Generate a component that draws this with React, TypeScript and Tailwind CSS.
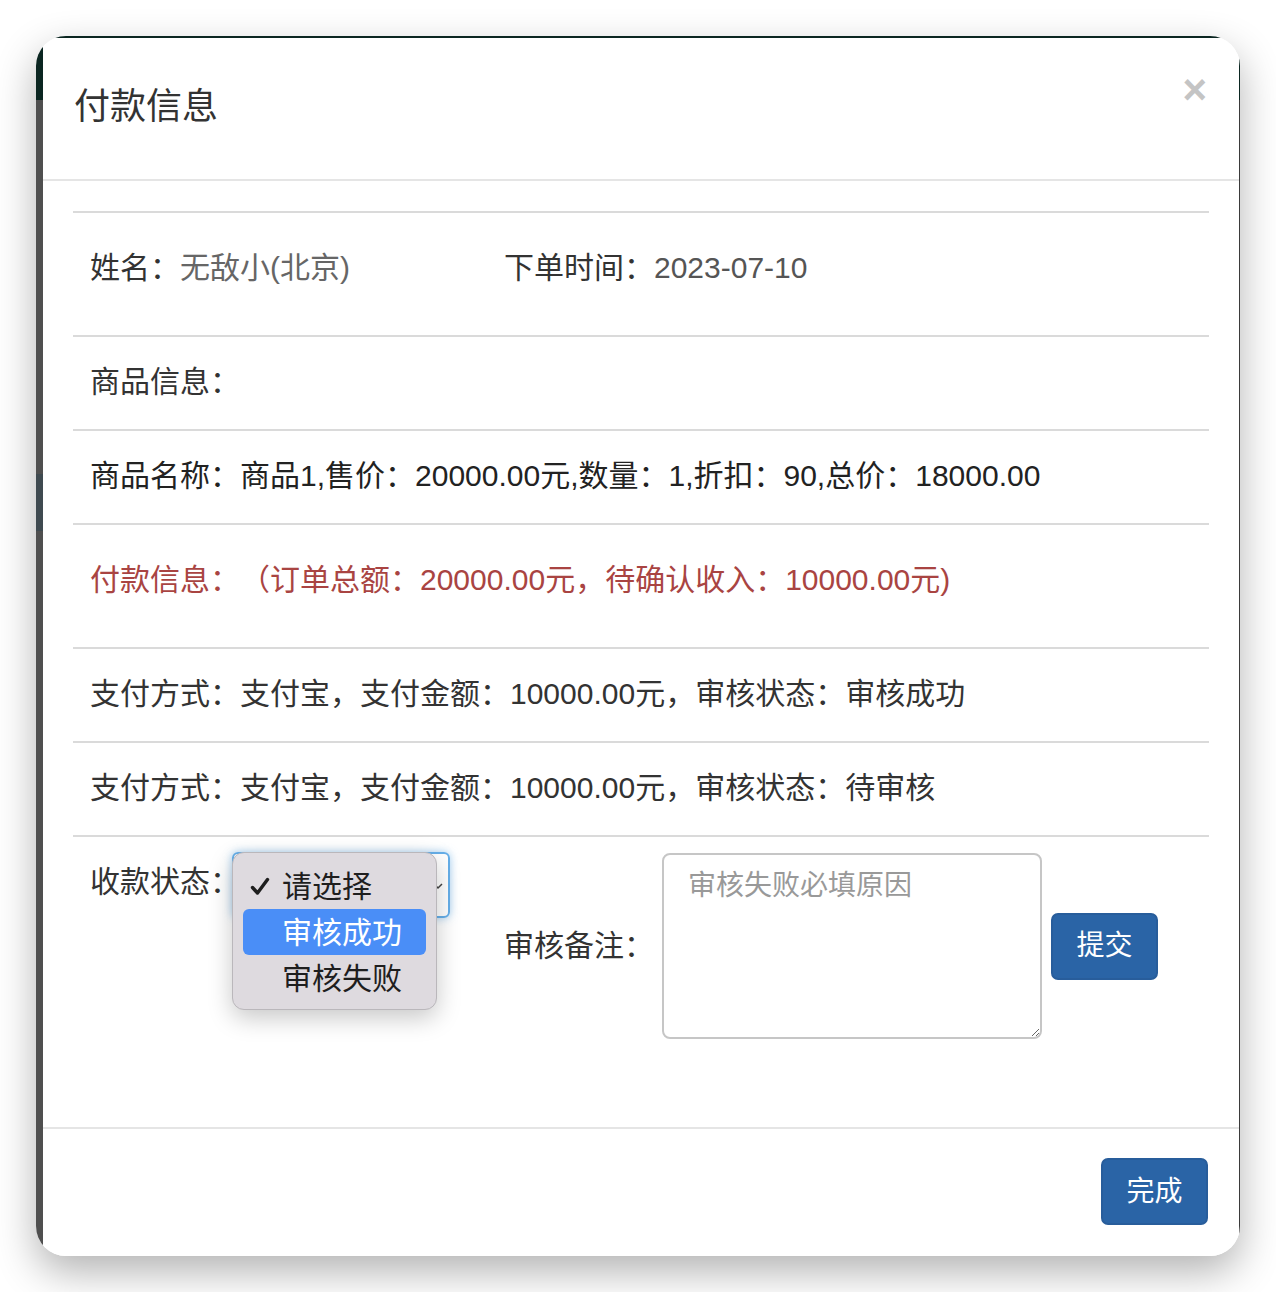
import React from 'react';

const font = { fontFamily: '"Liberation Sans", "Noto Sans CJK SC", sans-serif' };

function Hr() {
    return <div className="h-[2px] bg-[#dadada]" />;
}

function Row({ tall, children }: { tall?: boolean; children: React.ReactNode }) {
    return (
        <div className={`${tall ? 'h-[122px] pt-[33px]' : 'h-[92px] pt-[23px]'} pl-[17px] leading-[44px] whitespace-nowrap`}>
            {children}
        </div>
    );
}

function StatusMenu() {
    return (
        <div className="absolute left-[-2px] top-[-2px] z-10 h-[158px] w-[205px] rounded-[12px] border border-[#bab7bb] bg-[#dedadf] px-[10px] pt-[10px] shadow-[0_8px_24px_rgba(0,0,0,0.22)]">
            <div className="relative flex h-[46px] items-center pl-[39px] text-[#1e1e1e]">
                <svg className="absolute left-[7px] top-[14px]" width="20" height="19" viewBox="0 0 20 19">
                    <path d="M2.5 10.5 L7.5 16 L17.5 2.5" fill="none" stroke="#1e1e1e" strokeWidth="3.4" strokeLinecap="round" strokeLinejoin="round" />
                </svg>
                请选择
            </div>
            <div className="flex h-[46px] items-center rounded-[6px] bg-[#4a8ef7] pl-[39px] text-white">审核成功</div>
            <div className="flex h-[46px] items-center pl-[39px] text-[#1e1e1e]">审核失败</div>
        </div>
    );
}

export default function App() {
    return (
        <div className="min-h-[1292px] w-[1276px] bg-white p-[36px] [text-spacing-trim:space-all]" style={font}>
            <div className="flex h-[1220px] w-[1204px] overflow-hidden rounded-[30px] shadow-[0_16px_40px_rgba(0,0,0,0.3)]">
                {/* page behind the modal */}
                <div className="flex w-[7px] flex-col">
                    <div className="h-[64px] bg-[#0b2621]" />
                    <div className="h-[374px] bg-[#4f4f4f]" />
                    <div className="h-[57px] bg-[#3f4a50]" />
                    <div className="flex-1 bg-[#4f4f4f]" />
                </div>

                <div className="flex flex-1 flex-col">
                    <div className="h-[2px] bg-[#0b2621]" />
                    <div className="flex flex-1 flex-col bg-white">
                        {/* header */}
                        <div className="flex h-[143px] items-start justify-between border-b-2 border-[#e5e5e5] pl-[31px] pr-[32px]">
                            <h4 className="pt-[44px] text-[36px] leading-[50px] text-[#333]">付款信息</h4>
                            <button className="mt-[31px] text-[42px] font-bold leading-[42px] text-[#c4c4c4]">×</button>
                        </div>

                        {/* body */}
                        <div className="px-[30px] pt-[30px] text-[30px] text-[#333]">
                            <Hr />
                            <Row tall>
                                <div className="flex">
                                    <div className="w-[414px]">
                                        姓名：<span className="text-[#666]">无敌小(北京)</span>
                                    </div>
                                    <div>
                                        下单时间：<span className="text-[#555]">2023-07-10</span>
                                    </div>
                                </div>
                            </Row>
                            <Hr />
                            <Row>商品信息：</Row>
                            <Hr />
                            <Row>
                                <span className="text-[#222]">商品名称：商品1,售价：20000.00元,数量：1,折扣：90,总价：18000.00</span>
                            </Row>
                            <Hr />
                            <Row tall>
                                <span className="text-[#a94442]">付款信息：（订单总额：20000.00元，待确认收入：10000.00元)</span>
                            </Row>
                            <Hr />
                            <Row>支付方式：支付宝，支付金额：10000.00元，审核状态：审核成功</Row>
                            <Hr />
                            <Row>支付方式：支付宝，支付金额：10000.00元，审核状态：待审核</Row>
                            <Hr />

                            {/* review form */}
                            <div className="flex h-[290px] pl-[17px] pt-[15px]">
                                <div className="w-[142px] whitespace-nowrap pt-[8px] leading-[44px]">收款状态：</div>
                                <div className="relative h-[66px] w-[218px] rounded-[6px] border-2 border-[#66afe9] shadow-[0_0_8px_rgba(102,175,233,0.6)]">
                                    <svg className="absolute right-[5px] top-[28px]" width="10" height="8" viewBox="0 0 10 8">
                                        <path d="M1 2 L5 6 L9 2" fill="none" stroke="#444" strokeWidth="1.5" />
                                    </svg>
                                    <StatusMenu />
                                </div>
                                <div className="ml-[54px] mt-[1px] flex h-[186px] items-center">
                                    <div className="w-[158px] whitespace-nowrap leading-[44px]">审核备注：</div>
                                    <textarea
                                        className="h-[186px] w-[380px] rounded-[8px] border-2 border-[#c6c6c6] px-[24px] pt-[11px] text-[28px] leading-[40px] text-[#333] outline-none placeholder:text-[#999]"
                                        placeholder="审核失败必填原因"
                                    />
                                    <button className="ml-[9px] h-[67px] w-[107px] rounded-[7px] border-2 border-[#285d9b] bg-[#2a64a6] text-[28px] text-white">
                                        提交
                                    </button>
                                </div>
                            </div>
                        </div>

                        {/* footer */}
                        <div className="flex flex-1 items-start justify-end border-t-2 border-[#e5e5e5] pr-[31px] pt-[29px]">
                            <button className="h-[67px] w-[107px] rounded-[7px] border-2 border-[#285d9b] bg-[#2a64a6] text-[28px] text-white">
                                完成
                            </button>
                        </div>
                    </div>
                </div>

                <div className="flex w-[1px] flex-col">
                    <div className="h-[64px] bg-[#0b2621]" />
                    <div className="flex-1 bg-[#3a3a3a]" />
                </div>
            </div>
        </div>
    );
}
